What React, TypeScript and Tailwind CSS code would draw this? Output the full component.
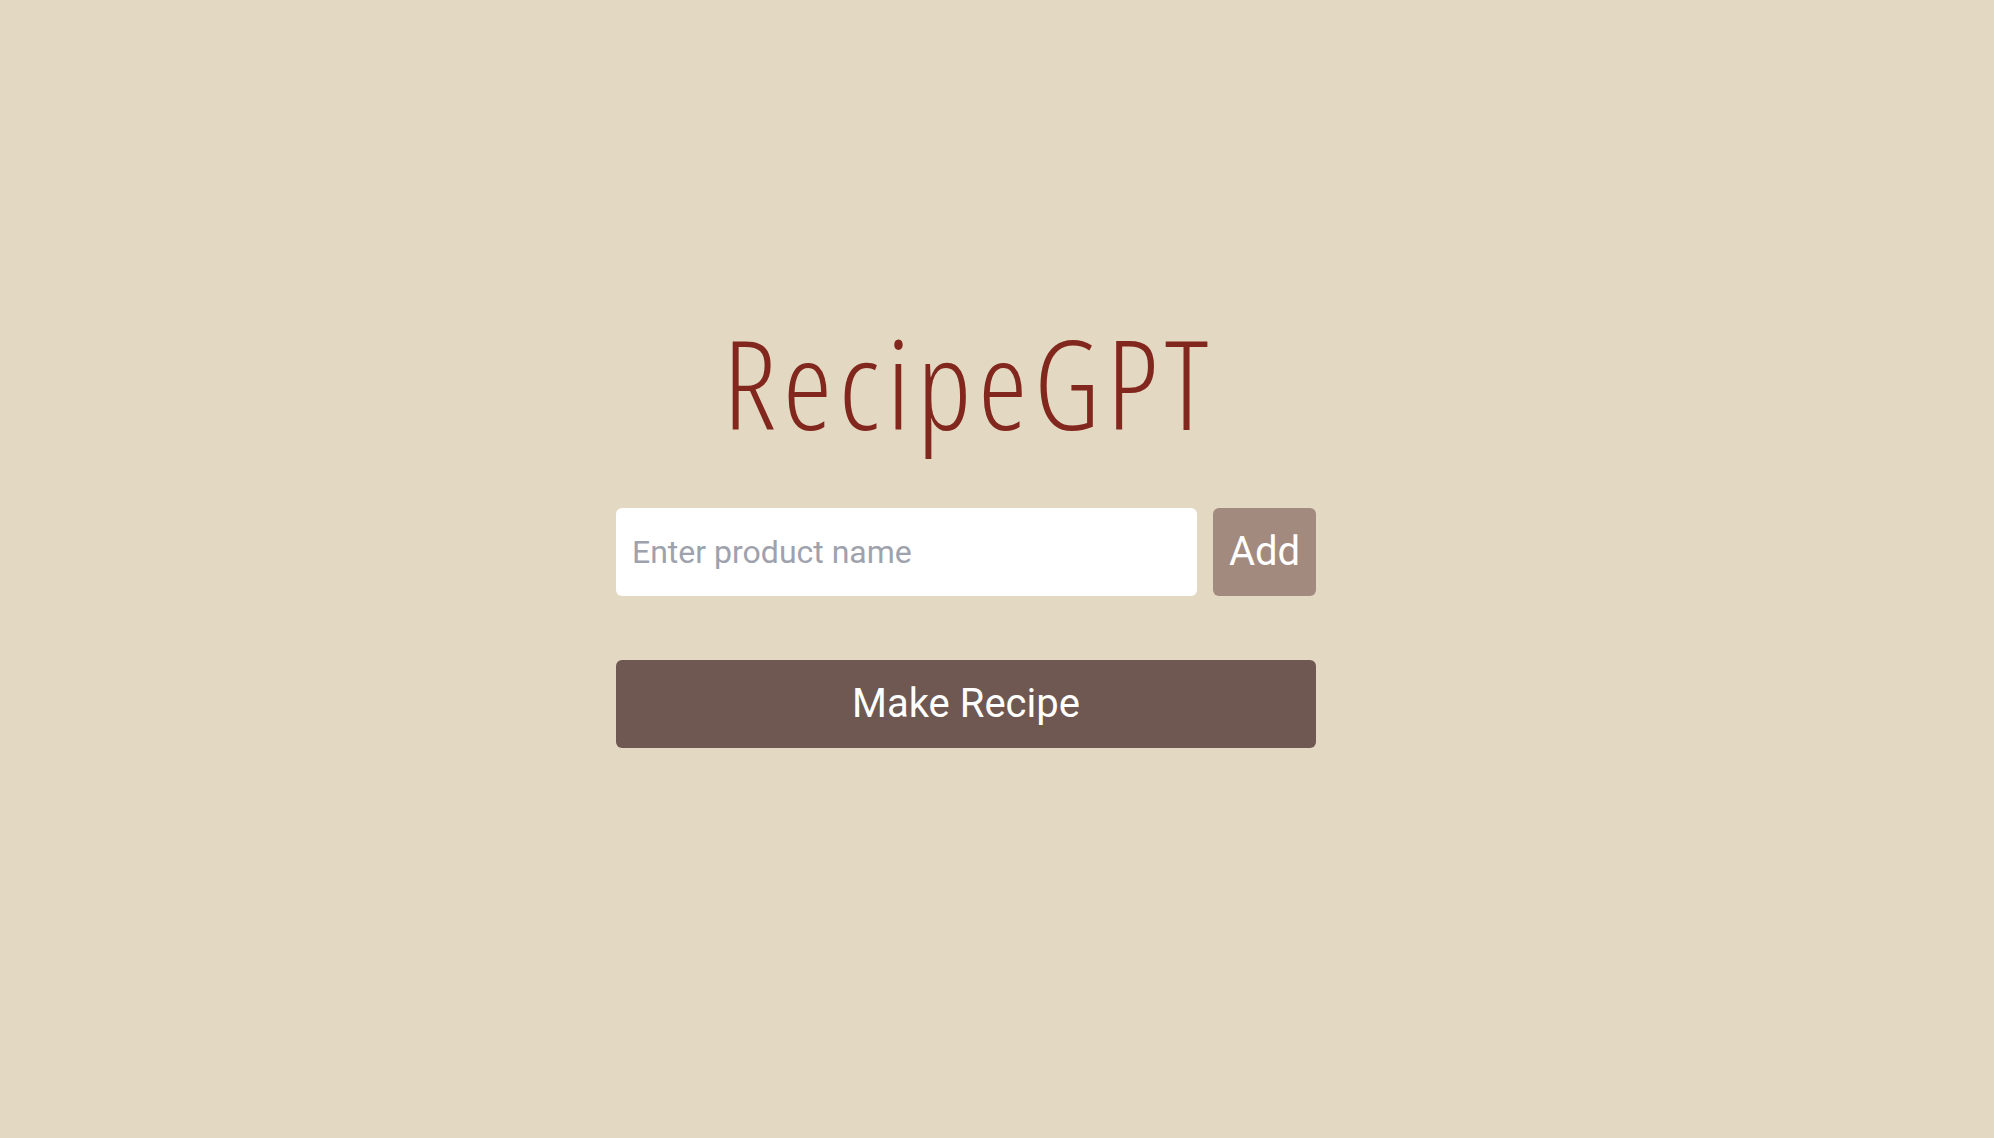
import { useState } from "react";

export default function App() {
  const [product, setProduct] = useState("");

  return (
    <div className="min-h-screen bg-[#e3d8c2] font-['Roboto',sans-serif] flex justify-center pr-[62px] pt-[320px]">
      <div className="w-[700px] flex flex-col items-center">
        {/* title */}
        <h1
          className="font-['Open_Sans',sans-serif] font-light text-[124px] leading-none tracking-[7px] pl-[7px] text-[#82271d]"
          style={{ fontStretch: "75%" }}
        >
          RecipeGPT
        </h1>

        {/* product input row */}
        <div className="mt-[64px] w-full flex gap-4">
          <input
            type="text"
            value={product}
            onChange={(e) => setProduct(e.target.value)}
            placeholder="Enter product name"
            className="flex-1 h-[88px] rounded-md bg-white px-4 text-[32px] text-gray-800 placeholder:text-[#9ea2ad] outline-none"
          />
          <button className="w-[103px] h-[88px] rounded-md bg-[#a38a7f] text-white text-[40px] cursor-pointer">
            Add
          </button>
        </div>

        <button className="mt-16 w-full h-[88px] rounded-md bg-[#6e5851] text-white text-[40px] cursor-pointer">
          Make Recipe
        </button>
      </div>
    </div>
  );
}
